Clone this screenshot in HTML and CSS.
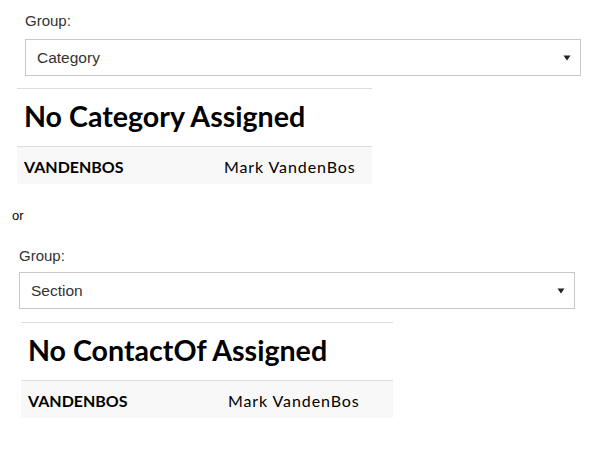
FILE: index.html
```html
<!DOCTYPE html>
<html>
<head>
<meta charset="utf-8">
<link rel="stylesheet" href="styles.css">
</head>
<body>
<section class="block block-a">
  <div class="field">
    <label class="field-label">Group:</label>
    <div class="select">
      <span class="select-value">Category</span>
      <svg class="caret" width="8" height="6" viewBox="0 0 8 6"><path d="M0.5 0.5 L7.5 0.5 L4 5.5 Z" fill="#222"/></svg>
    </div>
  </div>
  <div class="panel">
    <h2 class="panel-title">No Category Assigned</h2>
    <div class="row">
      <span class="row-key">VANDENBOS</span>
      <span class="row-val">Mark VandenBos</span>
    </div>
  </div>
</section>
<p class="or">or</p>
<section class="block block-b">
  <div class="field">
    <label class="field-label">Group:</label>
    <div class="select">
      <span class="select-value">Section</span>
      <svg class="caret" width="8" height="6" viewBox="0 0 8 6"><path d="M0.5 0.5 L7.5 0.5 L4 5.5 Z" fill="#222"/></svg>
    </div>
  </div>
  <div class="panel">
    <h2 class="panel-title">No ContactOf Assigned</h2>
    <div class="row">
      <span class="row-key">VANDENBOS</span>
      <span class="row-val">Mark VandenBos</span>
    </div>
  </div>
</section>
</body>
</html>
```
FILE: styles.css
```css
html, body {
  margin: 0;
  padding: 0;
  background: #fff;
}
body {
  font-family: "Liberation Sans", Arial, sans-serif;
  color: #333;
}
.block {
  display: flex;
  flex-direction: column;
}
.block-a {
  padding-top: 12px;
}
.block-a .field {
  padding-left: 25px;
  width: 556px;
}
.block-a .panel {
  margin-left: 17px;
  width: 355px;
  margin-top: 12px;
}
.block-b {
  padding-top: 12px;
}
.block-b .field {
  padding-left: 19px;
  width: 556px;
}
.block-b .field-label {
  margin-bottom: 8px;
}
.block-b .panel {
  margin-left: 21px;
  width: 372px;
  margin-top: 13px;
}
.field-label {
  display: block;
  font-size: 15px;
  line-height: 17px;
  color: #333;
  margin-bottom: 10px;
}
.select {
  box-sizing: border-box;
  height: 37px;
  border: 1px solid #c8c8c8;
  background: #fff;
  display: flex;
  align-items: center;
  justify-content: space-between;
  padding: 0 9px 0 11px;
}
.select-value {
  font-size: 15.5px;
  color: #333;
}
.caret {
  display: block;
}
.panel {
  border-top: 1px solid #ddd;
  font-family: Lato, "Open Sans", sans-serif;
  color: #000;
}
.panel-title {
  margin: 0;
  font-size: 28.6px;
  font-weight: 700;
  line-height: 36px;
  padding: 9px 7px 12px;
  border-bottom: 1px solid #ddd;
}
.row {
  display: grid;
  grid-template-columns: 200px 1fr;
  background: #f8f8f8;
  padding: 11px 7px 8px;
  font-size: 16px;
  line-height: 18px;
}
.row-key {
  font-weight: 700;
}
.row-val {
  font-weight: 400;
  letter-spacing: 0.9px;
}
.or {
  margin: 0;
  padding: 24px 0 0 12px;
  font-size: 13px;
  line-height: 15px;
  color: #000;
  height: 27px;
}
```
